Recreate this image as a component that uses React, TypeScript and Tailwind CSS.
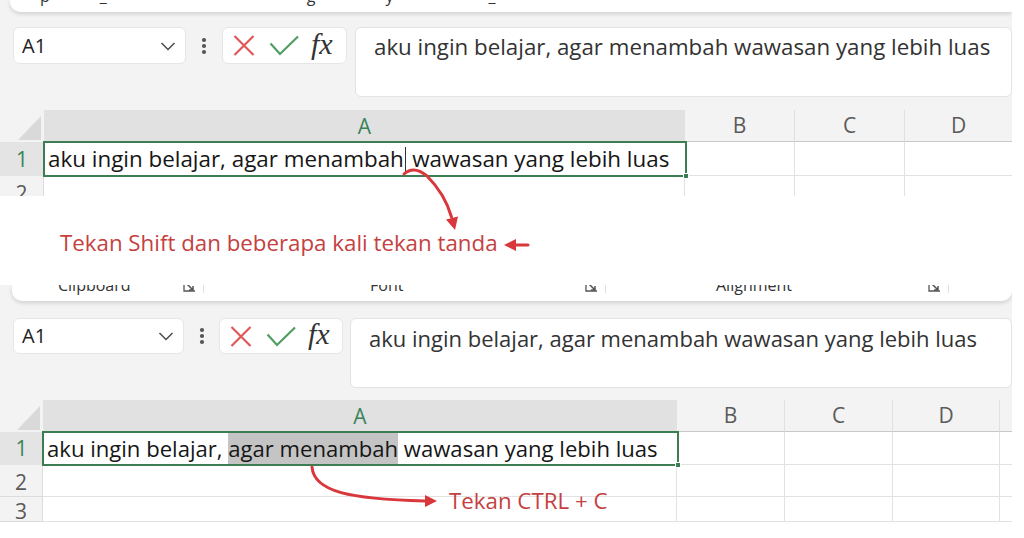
import React from "react";

function Chevron() {
  return (
    <svg width="16" height="10" viewBox="0 0 16 10" fill="none">
      <path d="M1.5 2 L8 8.5 L14.5 2" stroke="#4a4a4a" strokeWidth="1.5" />
    </svg>
  );
}

function Dots() {
  return (
    <svg width="6" height="18" viewBox="0 0 6 18">
      <circle cx="3" cy="3" r="2.1" fill="#555" />
      <circle cx="3" cy="9" r="2.1" fill="#555" />
      <circle cx="3" cy="15" r="2.1" fill="#555" />
    </svg>
  );
}

function Cross() {
  return (
    <svg width="22" height="21" viewBox="0 0 22 21" fill="none">
      <path d="M1.5 1 L20.5 20 M20.5 1 L1.5 20" stroke="#e0575a" strokeWidth="2.2" />
    </svg>
  );
}

function Check() {
  return (
    <svg width="30" height="21" viewBox="0 0 30 21" fill="none">
      <path d="M1.5 8.5 L11 19 L29 1.5" stroke="#4f9d62" strokeWidth="2.2" />
    </svg>
  );
}

function Launcher() {
  return (
    <svg width="13" height="12" viewBox="0 0 13 12" fill="none">
      <path d="M1 1 V11 H12" stroke="#555" strokeWidth="1.3" />
      <path d="M4.5 4.5 L10 10 M6 10 H10 V6" stroke="#555" strokeWidth="1.5" />
    </svg>
  );
}

type FormulaProps = {
  nameCls: string;
  dotsCls: string;
  btnCls: string;
  barCls: string;
  textCls: string;
};

function FormulaRow({ nameCls, dotsCls, btnCls, barCls, textCls }: FormulaProps) {
  return (
    <div className="flex items-start pl-[13px] pr-0">
      <div
        className={`${nameCls} bg-white rounded-[6px] border border-[#e6e6e6] flex items-center justify-between pl-[8px] pr-[9px]`}
      >
        <span className="text-[20px] leading-none text-[#222]">A1</span>
        <Chevron />
      </div>
      <div className={`${dotsCls} flex items-center justify-center`}>
        <Dots />
      </div>
      <div
        className={`${btnCls} bg-white rounded-[6px] border border-[#e6e6e6] flex items-center pl-[10px] gap-[14px]`}
      >
        <Cross />
        <Check />
        <span className="font-['Liberation_Serif',serif] italic text-[30px] leading-none text-[#333] -mt-[4px] ml-[-2px]">
          fx
        </span>
      </div>
      <div className={`${barCls} bg-white rounded-[6px] border border-[#e3e3e3]`}>
        <div className={`${textCls} leading-none text-[#333] whitespace-pre`}>
          aku ingin belajar, agar menambah wawasan yang lebih luas
        </div>
      </div>
    </div>
  );
}

function Corner({ w }: { w: string }) {
  return (
    <div className={`${w} shrink-0 flex items-end justify-end pr-[3px] pb-[2px]`}>
      <svg width="23" height="24" viewBox="0 0 23 24">
        <polygon points="23,0 23,24 0,24" fill="#d9d9d9" />
      </svg>
    </div>
  );
}

export default function App() {
  return (
    <div className="relative w-[1024px] h-[538px] overflow-hidden bg-white font-['Open_Sans',sans-serif]">
      {/* ===== Screenshot 1 ===== */}
      <div className="w-[1012px] h-[196px] overflow-hidden bg-[#f3f3f3]">
        {/* ribbon remnant */}
        <div className="ml-[10px] h-[12px] bg-white rounded-bl-[10px] shadow-[0_2px_4px_rgba(0,0,0,0.14)] overflow-hidden">
          <div className="flex text-[16px] leading-none text-[#333] -mt-[12px] whitespace-pre">
            <span className="ml-[30px]">p</span>
            <span className="ml-[50px]">_</span>
            <span className="ml-[200px]">g</span>
            <span className="ml-[70px]">y</span>
            <span className="ml-[95px]">_</span>
          </div>
        </div>

        <div className="mt-[15px]">
          <FormulaRow
            nameCls="w-[173px] h-[37px]"
            dotsCls="w-[36px] h-[37px]"
            btnCls="w-[125px] h-[37px]"
            barCls="ml-[8px] w-[657px] h-[70px]"
            textCls="pl-[18px] pt-[8px] text-[22.3px]"
          />
        </div>

        {/* grid */}
        <div className="mt-[13px]">
          <div className="flex h-[32px]">
            <Corner w="w-[44px]" />
            <div className="w-[641px] bg-[#e1e1e1] flex items-center justify-center text-[21px] leading-none text-[#3a8358]">
              A
            </div>
            <div className="w-[110px] border-r border-[#e0e0e0] border-b border-b-[#c9c9c9] flex items-center justify-center text-[21px] leading-none text-[#5a5a5a]">
              B
            </div>
            <div className="w-[110px] border-r border-[#e0e0e0] border-b border-b-[#c9c9c9] flex items-center justify-center text-[21px] leading-none text-[#5a5a5a]">
              C
            </div>
            <div className="w-[107px] border-b border-[#c9c9c9] flex items-center justify-center text-[21px] leading-none text-[#5a5a5a]">
              D
            </div>
          </div>
          <div className="flex h-[34px]">
            <div className="w-[44px] bg-[#e4e4e4] flex items-center justify-center text-[21px] leading-none text-[#3a8358]">
              1
            </div>
            <div className="relative w-[641px] bg-white flex items-center pl-[4px] whitespace-pre text-[22.4px] leading-none text-[#161616]">
              <span>aku ingin belajar, agar menambah</span>
              <span className="inline-block w-[1.5px] h-[25px] bg-[#333] ml-[1px]" />
              <span> wawasan yang lebih luas</span>
              <div className="absolute -left-[1px] -top-[1px] -right-[2px] -bottom-[1px] border-2 border-[#3d7d53]" />
              <div className="absolute -right-[4px] -bottom-[3px] w-[6px] h-[6px] bg-[#3d7d53] border border-white" />
            </div>
            <div className="w-[110px] bg-white border-r border-b border-[#e2e2e2]" />
            <div className="w-[110px] bg-white border-r border-b border-[#e2e2e2]" />
            <div className="w-[107px] bg-white border-b border-[#e2e2e2]" />
          </div>
          <div className="flex h-[34px]">
            <div className="w-[44px] flex items-center justify-center text-[21px] leading-none text-[#5a5a5a] border-r border-[#dcdcdc]">
              2
            </div>
            <div className="w-[641px] bg-white border-r border-[#e2e2e2]" />
            <div className="w-[110px] bg-white border-r border-[#e2e2e2]" />
            <div className="w-[110px] bg-white border-r border-[#e2e2e2]" />
            <div className="w-[107px] bg-white" />
          </div>
        </div>
      </div>

      {/* ===== Annotation 1 ===== */}
      <div className="h-[89px] bg-white pl-[60px] pt-[36px]">
        <span className="text-[22.3px] leading-none text-[#c4413f]">
          Tekan Shift dan beberapa kali tekan tanda
        </span>
      </div>

      {/* ===== Screenshot 2 ===== */}
      <div className="w-[1012px] h-[237px] overflow-hidden bg-[#f3f3f3]">
        {/* ribbon bottom remnant */}
        <div className="ml-[12px] h-[16px] bg-white rounded-b-[10px] shadow-[0_2px_4px_rgba(0,0,0,0.14)] overflow-hidden">
          <div className="flex items-start text-[16px] leading-none text-[#333] -mt-[8px]">
            <span className="ml-[46px] w-[125px]">Clipboard</span>
            <span className="mt-[3px]"><Launcher /></span>
            <span className="ml-[7px] mt-[2px] w-[1px] h-[14px] bg-[#e0e0e0]" />
            <span className="ml-[166px] w-[215px]">Font</span>
            <span className="mt-[3px]"><Launcher /></span>
            <span className="ml-[7px] mt-[2px] w-[1px] h-[14px] bg-[#e0e0e0]" />
            <span className="ml-[110px] w-[212px]">Alignment</span>
            <span className="mt-[3px]"><Launcher /></span>
            <span className="ml-[7px] mt-[2px] w-[1px] h-[14px] bg-[#e0e0e0]" />
          </div>
        </div>

        <div className="mt-[17px]">
          <FormulaRow
            nameCls="w-[171px] h-[36px]"
            dotsCls="w-[35px] h-[36px]"
            btnCls="w-[124px] h-[36px]"
            barCls="ml-[7px] w-[662px] h-[70px]"
            textCls="pl-[18px] pt-[8px] text-[22px]"
          />
        </div>

        <div className="mt-[12px]">
          <div className="flex h-[32px]">
            <Corner w="w-[43px]" />
            <div className="w-[634px] bg-[#e1e1e1] flex items-center justify-center text-[21px] leading-none text-[#3a8358]">
              A
            </div>
            <div className="w-[108px] border-r border-[#e0e0e0] border-b border-b-[#c9c9c9] flex items-center justify-center text-[21px] leading-none text-[#5a5a5a]">
              B
            </div>
            <div className="w-[108px] border-r border-[#e0e0e0] border-b border-b-[#c9c9c9] flex items-center justify-center text-[21px] leading-none text-[#5a5a5a]">
              C
            </div>
            <div className="w-[107px] border-r border-[#e0e0e0] border-b border-b-[#c9c9c9] flex items-center justify-center text-[21px] leading-none text-[#5a5a5a]">
              D
            </div>
            <div className="w-[12px] border-b border-[#c9c9c9]" />
          </div>
          <div className="flex h-[33px]">
            <div className="w-[43px] bg-[#e4e4e4] flex items-center justify-center text-[21px] leading-none text-[#3a8358]">
              1
            </div>
            <div className="relative w-[634px] bg-white flex items-stretch pl-[4px] whitespace-pre text-[22.1px] leading-none text-[#161616]">
              <span className="self-center">aku ingin belajar, </span>
              <span className="bg-[#c4c4c4] flex items-center">agar menambah</span>
              <span className="self-center"> wawasan yang lebih luas</span>
              <div className="absolute -left-[1px] -top-[1px] -right-[2px] -bottom-[1px] border-2 border-[#3d7d53]" />
              <div className="absolute -right-[4px] -bottom-[3px] w-[6px] h-[6px] bg-[#3d7d53] border border-white" />
            </div>
            <div className="w-[108px] bg-white border-r border-b border-[#e2e2e2]" />
            <div className="w-[108px] bg-white border-r border-b border-[#e2e2e2]" />
            <div className="w-[107px] bg-white border-r border-b border-[#e2e2e2]" />
            <div className="w-[12px] bg-white border-b border-[#e2e2e2]" />
          </div>
          {[
            { n: "2", h: "h-[32px]" },
            { n: "3", h: "h-[25px]" },
          ].map((r) => (
            <div key={r.n} className={`flex ${r.h}`}>
              <div className="w-[43px] flex items-center justify-center text-[21px] leading-none text-[#5a5a5a] border-r border-b border-[#dcdcdc] pt-[4px]">
                {r.n}
              </div>
              <div className="w-[634px] bg-white border-r border-b border-[#e2e2e2]" />
              <div className="w-[108px] bg-white border-r border-b border-[#e2e2e2]" />
              <div className="w-[108px] bg-white border-r border-b border-[#e2e2e2]" />
              <div className="w-[107px] bg-white border-r border-b border-[#e2e2e2]" />
              <div className="w-[12px] bg-white border-b border-[#e2e2e2]" />
            </div>
          ))}
        </div>
      </div>

      {/* ===== annotation overlay ===== */}
      <span className="absolute left-[449px] top-[490px] text-[22.3px] leading-none text-[#c4413f] whitespace-pre">
        Tekan CTRL + C
      </span>
      <svg
        className="absolute left-0 top-0 pointer-events-none"
        width="1024"
        height="538"
        viewBox="0 0 1024 538"
        fill="none"
      >
        <path
          d="M404 174 Q414 165 427 176 Q445 194 451.5 217"
          stroke="#d8373b"
          strokeWidth="3"
          strokeLinecap="round"
        />
        <polygon points="455,230 446,219.5 458,216.5" fill="#d8373b" />
        <path d="M514 245 H528" stroke="#d8373b" strokeWidth="3" strokeLinecap="round" />
        <polygon points="504,245 516,239 516,251" fill="#d8373b" />
        <path
          d="M312 467 C314 492 350 499 425 501"
          stroke="#d8373b"
          strokeWidth="3"
          strokeLinecap="round"
        />
        <polygon points="437,501 425,495 425,507" fill="#d8373b" />
      </svg>
    </div>
  );
}
